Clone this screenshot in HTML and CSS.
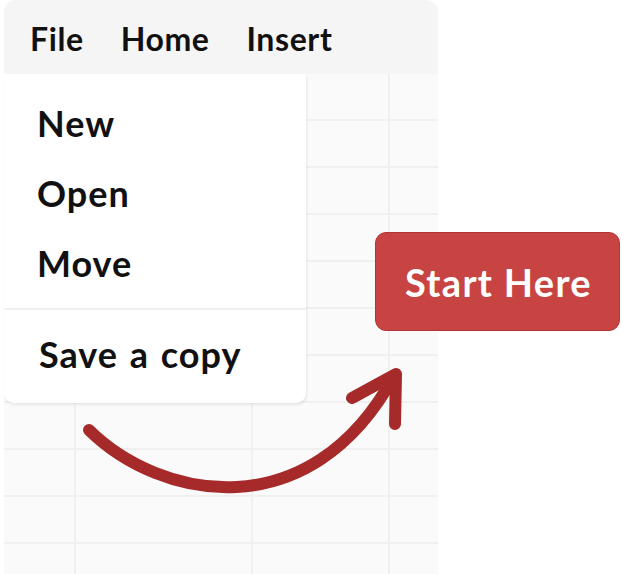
FILE: index.html
```html
<!DOCTYPE html>
<html lang="en">
<head>
    <meta charset="UTF-8">
    <meta name="viewport" content="width=device-width, initial-scale=1.0">
    <title>Start Here</title>
    <link rel="stylesheet" href="styles.css">
</head>
<body>
    <div class="stage">
        <div class="sheet">
            <div class="menubar">
                <span class="menubar-item">File</span>
                <span class="menubar-item">Home</span>
                <span class="menubar-item">Insert</span>
            </div>
            <div class="grid">
                <div class="cell"></div><div class="cell"></div><div class="cell"></div><div class="cell"></div>
                <div class="cell"></div><div class="cell"></div><div class="cell"></div><div class="cell"></div>
                <div class="cell"></div><div class="cell"></div><div class="cell"></div><div class="cell"></div>
                <div class="cell"></div><div class="cell"></div><div class="cell"></div><div class="cell"></div>
                <div class="cell"></div><div class="cell"></div><div class="cell"></div><div class="cell"></div>
                <div class="cell"></div><div class="cell"></div><div class="cell"></div><div class="cell"></div>
                <div class="cell"></div><div class="cell"></div><div class="cell"></div><div class="cell"></div>
                <div class="cell"></div><div class="cell"></div><div class="cell"></div><div class="cell"></div>
                <div class="cell"></div><div class="cell"></div><div class="cell"></div><div class="cell"></div>
                <div class="cell"></div><div class="cell"></div><div class="cell"></div><div class="cell"></div>
                <div class="cell"></div><div class="cell"></div><div class="cell"></div><div class="cell"></div>
            </div>

            <div class="dropdown">
                <div class="dropdown-item">New</div>
                <div class="dropdown-item">Open</div>
                <div class="dropdown-item">Move</div>
                <div class="dropdown-divider"></div>
                <div class="dropdown-item save">Save a copy</div>
            </div>
        </div>

        <button class="start-button">Start Here</button>

        <svg class="arrow" width="622" height="574" viewBox="0 0 622 574">
            <path d="M89 430 C 160 500, 310 530, 394 376" fill="none" stroke="#a52a29" stroke-width="12" stroke-linecap="round"/>
            <path d="M352 398 L 396 374 L 395 424" fill="none" stroke="#a52a29" stroke-width="12" stroke-linecap="round" stroke-linejoin="round"/>
        </svg>
    </div>
</body>
</html>
```

FILE: styles.css
```css
body {
    margin: 0;
    background: #ffffff;
    font-family: Lato, "Open Sans", sans-serif;
    color: #111;
}
.stage {
    position: relative;
    width: 622px;
    height: 574px;
    overflow: hidden;
}
.sheet {
    position: relative;
    width: 434px;
    margin-left: 4px;
}
.menubar {
    height: 74px;
    background: #f5f5f5;
    border-radius: 12px 12px 0 0;
    display: flex;
    align-items: center;
    gap: 37px;
    padding-left: 26px;
    padding-top: 2px;
    box-sizing: border-box;
}
.menubar-item {
    font-size: 32px;
    font-weight: 700;
    letter-spacing: 0.6px;
}
.grid {
    display: grid;
    grid-template-columns: 72px 177px 137px 48px;
    grid-auto-rows: 47px;
    background: #fafafa;
}
.cell {
    border-right: 2px solid #f0f0f0;
    border-bottom: 2px solid #f0f0f0;
}
.cell:nth-child(4n) {
    border-right: none;
}
.dropdown {
    position: absolute;
    left: 0;
    top: 74px;
    width: 302px;
    padding: 14px 0 14px;
    background: #ffffff;
    border-radius: 0 0 10px 10px;
    box-shadow: 1px 2px 3px rgba(0,0,0,0.08);
}
.dropdown-item {
    font-size: 36px;
    font-weight: 700;
    line-height: 70px;
    padding-left: 33px;
    letter-spacing: 1px;
}
.dropdown-divider {
    height: 2px;
    background: #efefef;
    margin: 10px 0 9px;
}
.dropdown-item.save {
    padding-left: 35px;
    word-spacing: 2px;
}
.start-button {
    position: absolute;
    left: 375px;
    top: 232px;
    width: 245px;
    height: 99px;
    background: #c84442;
    border: 1px solid #b03533;
    border-radius: 11px;
    color: #ffffff;
    font-family: Lato, "Open Sans", sans-serif;
    font-size: 38px;
    font-weight: 700;
    letter-spacing: 1.3px;
    padding: 0 0 0 2px;
}
.arrow {
    position: absolute;
    left: 0;
    top: 0;
    pointer-events: none;
}
```
